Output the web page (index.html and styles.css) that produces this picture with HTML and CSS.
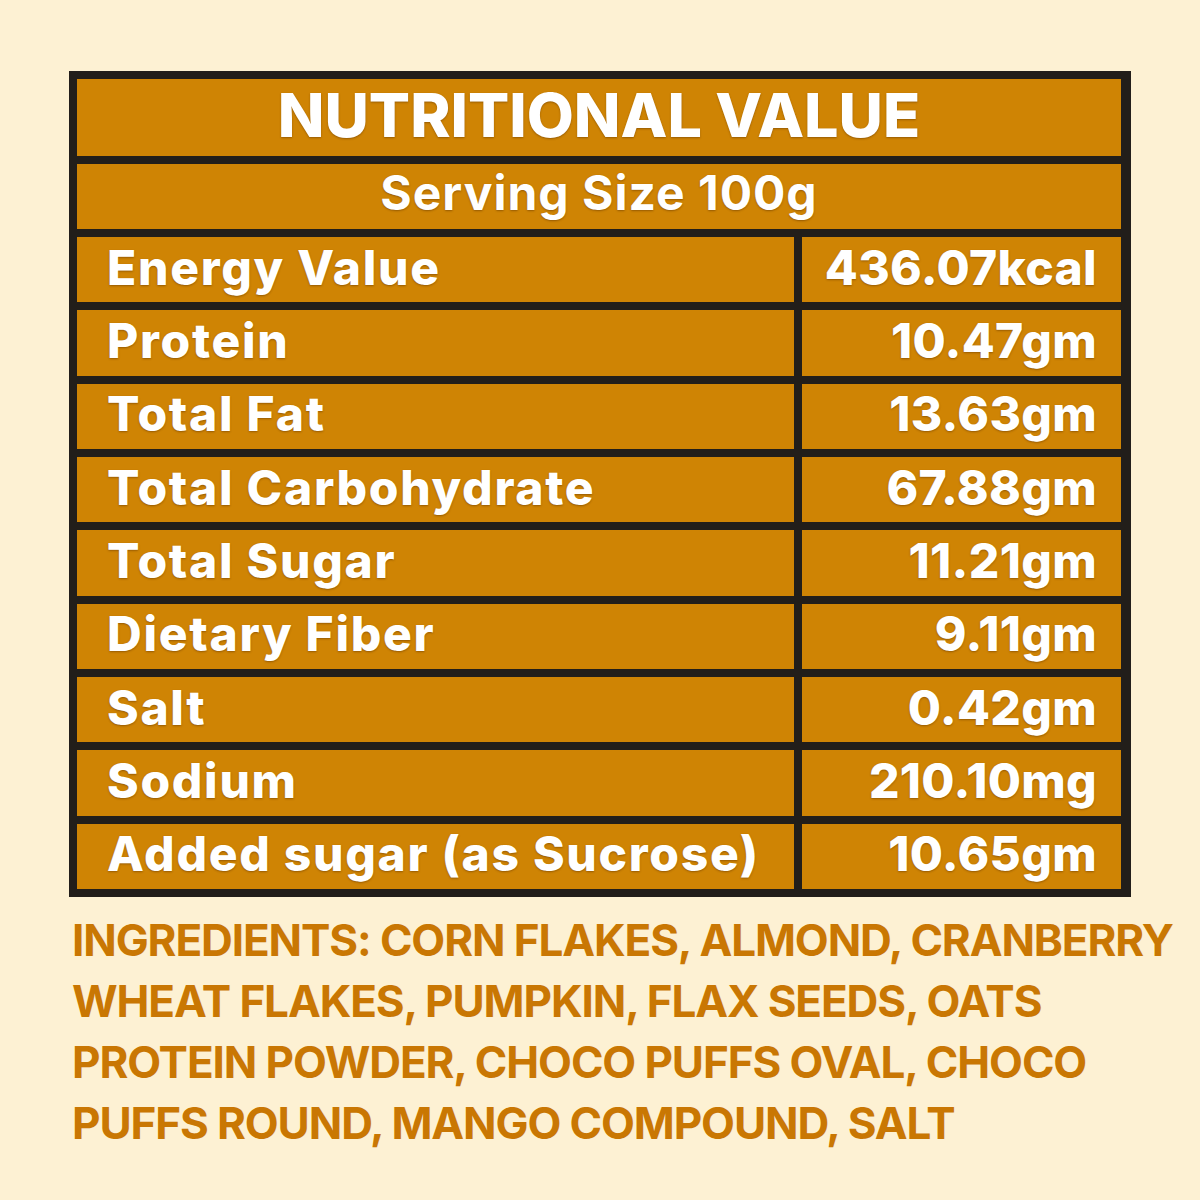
FILE: index.html
```html
<!DOCTYPE html>
<html>
<head>
<meta charset="utf-8">
<link rel="stylesheet" href="styles.css">
</head>
<body>
<main class="page">
  <section class="table">
    <div class="cell title">NUTRITIONAL VALUE</div>
    <div class="cell serving">Serving Size 100g</div>
    <div class="cell label">Energy Value</div><div class="cell value">436.07kcal</div>
    <div class="cell label">Protein</div><div class="cell value">10.47gm</div>
    <div class="cell label">Total Fat</div><div class="cell value">13.63gm</div>
    <div class="cell label">Total Carbohydrate</div><div class="cell value">67.88gm</div>
    <div class="cell label">Total Sugar</div><div class="cell value">11.21gm</div>
    <div class="cell label">Dietary Fiber</div><div class="cell value">9.11gm</div>
    <div class="cell label">Salt</div><div class="cell value">0.42gm</div>
    <div class="cell label">Sodium</div><div class="cell value">210.10mg</div>
    <div class="cell label">Added sugar (as Sucrose)</div><div class="cell value">10.65gm</div>
  </section>
  <p class="ingredients">INGREDIENTS: CORN FLAKES, ALMOND, CRANBERRY<br>WHEAT FLAKES, PUMPKIN, FLAX SEEDS, OATS<br>PROTEIN POWDER, CHOCO PUFFS OVAL, CHOCO<br>PUFFS ROUND, MANGO COMPOUND, SALT</p>
</main>
</body>
</html>
```

FILE: styles.css
```css
html, body {
  margin: 0;
  padding: 0;
  background: #fdf1d3;
}
.page {
  width: 1200px;
  height: 1200px;
  box-sizing: border-box;
  padding: 71px 69px 0 69px;
  font-family: "Inter", "Liberation Sans", sans-serif;
}
.table {
  display: grid;
  grid-template-columns: 717px 319px;
  grid-template-rows: 77px 65px repeat(9, 65.33px);
  gap: 8px;
  border: 8px solid #221e1a;
  background: #221e1a;
}
.cell {
  background: #cf8404;
  color: #ffffff;
  font-weight: 800;
  display: flex;
  align-items: center;
  text-shadow: 0 1px 2px rgba(80, 40, 0, 0.45);
  white-space: nowrap;
  padding-bottom: 5px;
  box-sizing: border-box;
}
.title {
  grid-column: 1 / 3;
  justify-content: center;
  font-size: 61px;
  font-weight: 800;
  padding-bottom: 6px;
}
.serving {
  grid-column: 1 / 3;
  justify-content: center;
  font-size: 48px;
  font-weight: 700;
  letter-spacing: 1px;
  padding-bottom: 8px;
}
.label {
  padding-left: 30px;
  font-size: 48px;
  letter-spacing: 1.7px;
}
.value {
  justify-content: flex-end;
  padding-right: 24px;
  font-size: 48px;
  letter-spacing: 0.3px;
}
.ingredients {
  margin: 13px 0 0 3px;
  color: #c97703;
  font-weight: 700;
  font-size: 44px;
  letter-spacing: -1.1px;
  line-height: 61px;
  white-space: nowrap;
}
```
